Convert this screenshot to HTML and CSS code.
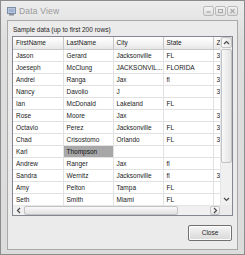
FILE: index.html
```html
<!DOCTYPE html>
<html>
<head>
<meta charset="utf-8">
<link rel="stylesheet" href="styles.css">
</head>
<body>
<div class="window">
  <div class="titlebar">
    <svg class="appicon" width="9" height="9" viewBox="0 0 9 9">
      <rect x="0.5" y="0.5" width="8" height="6" fill="#cfd8e6" stroke="#7d8ea8"/>
      <rect x="1.5" y="1.5" width="6" height="4" fill="#9fb3d1"/>
      <rect x="2" y="7" width="5" height="1.5" fill="#8a8f98"/>
    </svg>
    <span class="title">Data View</span>
    <div class="tbuttons">
      <span class="tbtn"><svg width="9" height="8" viewBox="0 0 9 8"><rect x="2.5" y="4.5" width="4" height="1" fill="#9a9a9a"/></svg></span>
      <span class="tbtn"><svg width="9" height="8" viewBox="0 0 9 8"><rect x="2.5" y="2.5" width="4" height="3" fill="none" stroke="#a8a8a8"/></svg></span>
      <span class="tbtn"><svg width="9" height="8" viewBox="0 0 9 8"><path d="M2.5 2 L6.5 6 M6.5 2 L2.5 6" stroke="#a8a8a8" stroke-width="1.1"/></svg></span>
    </div>
  </div>
  <div class="client">
    <div class="caption">Sample data (up to first 200 rows)</div>
    <div class="grid">
      <div class="viewport">
        <table>
          <colgroup><col class="c"><col class="c"><col class="c"><col class="c"><col class="c"></colgroup>
          <thead>
            <tr><th>FirstName</th><th>LastName</th><th>City</th><th>State</th><th>Zip</th></tr>
          </thead>
          <tbody>
            <tr><td>Jason</td><td>Gerard</td><td>Jacksonville</td><td>FL</td><td>32256</td></tr>
            <tr><td>Joeseph</td><td>McClung</td><td>JACKSONVIL...</td><td>FLORIDA</td><td>32258</td></tr>
            <tr><td>Andrei</td><td>Ranga</td><td>Jax</td><td>fl</td><td>32256</td></tr>
            <tr><td>Nancy</td><td>Davolio</td><td>J</td><td></td><td>32256</td></tr>
            <tr><td>Ian</td><td>McDonald</td><td>Lakeland</td><td>FL</td><td></td></tr>
            <tr><td>Rose</td><td>Moore</td><td>Jax</td><td></td><td>32256</td></tr>
            <tr><td>Octavio</td><td>Perez</td><td>Jacksonville</td><td>FL</td><td>32256</td></tr>
            <tr><td>Chad</td><td>Crisostomo</td><td>Orlando</td><td>FL</td><td>32801</td></tr>
            <tr><td>Karl</td><td class="sel">Thompson</td><td></td><td></td><td></td></tr>
            <tr><td>Andrew</td><td>Ranger</td><td>Jax</td><td>fl</td><td></td></tr>
            <tr><td>Sandra</td><td>Wernitz</td><td>Jacksonville</td><td>fl</td><td>32256</td></tr>
            <tr><td>Amy</td><td>Pelton</td><td>Tampa</td><td>FL</td><td></td></tr>
            <tr><td>Seth</td><td>Smith</td><td>Miami</td><td>FL</td><td></td></tr>
          </tbody>
        </table>
      </div>
      <div class="vscroll">
        <span class="sbtn"><svg width="7" height="5" viewBox="0 0 7 5"><path d="M1 4 L3.5 1.5 L6 4" fill="none" stroke="#4a4a4a" stroke-width="1.2"/></svg></span>
        <span class="vtrack"><span class="vthumb"></span></span>
        <span class="sbtn"><svg width="7" height="5" viewBox="0 0 7 5"><path d="M1 1 L3.5 3.5 L6 1" fill="none" stroke="#4a4a4a" stroke-width="1.2"/></svg></span>
      </div>
      <div class="hscroll">
        <span class="sbtn"><svg width="5" height="7" viewBox="0 0 5 7"><path d="M4 1 L1.5 3.5 L4 6" fill="none" stroke="#4a4a4a" stroke-width="1.2"/></svg></span>
        <span class="htrack"><span class="hthumb"></span></span>
        <span class="sbtn"><svg width="5" height="7" viewBox="0 0 5 7"><path d="M1 1 L3.5 3.5 L1 6" fill="none" stroke="#4a4a4a" stroke-width="1.2"/></svg></span>
      </div>
      <div class="corner"></div>
    </div>
    <div class="footer">
      <button class="close">Close</button>
    </div>
  </div>
</div>
</body>
</html>
```
FILE: styles.css
```css
html, body {
  margin: 0;
  padding: 0;
  width: 245px;
  height: 255px;
  overflow: hidden;
  background: #ffffff;
  font-family: "Liberation Sans", Arial, sans-serif;
  font-size: 6.5px;
  color: #222;
}
.window {
  box-sizing: border-box;
  width: 245px;
  height: 255px;
  border: 1px solid #8c8c8c;
  background: linear-gradient(#ececec, #dedede 40px, #dcdcdc);
  display: flex;
  flex-direction: column;
  padding: 0 6px 4px 6px;
}
.titlebar {
  height: 19px;
  display: flex;
  align-items: center;
  gap: 3px;
  padding-left: 0;
}
.appicon { display: block; margin-top: 1px; }
.title {
  font-family: "Liberation Sans", Arial, sans-serif;
  font-size: 8.5px;
  color: #9a9a9a;
  letter-spacing: 0.2px;
}
.tbuttons {
  margin-left: auto;
  display: flex;
  gap: 1px;
  margin-right: 0;
}
.tbtn {
  width: 9px;
  height: 8px;
  border: 1px solid #b9b9b9;
  border-radius: 2px;
  background: linear-gradient(#f4f4f4, #dcdcdc);
  display: flex;
}
.tbtn svg { display: block; }
.client {
  flex: 1;
  border: 1px solid #a9a9a9;
  background: #ebebeb;
  display: flex;
  flex-direction: column;
  padding: 3px 4px 0 4px;
}
.caption {
  height: 12px;
  line-height: 12px;
  color: #1e1e1e;
  padding-left: 1px;
}
.grid {
  margin-left: 0;
  height: 178px;
  border: 1px solid #828790;
  background: #ffffff;
  display: grid;
  grid-template-columns: 1fr 12px;
  grid-template-rows: 1fr 10px;
  overflow: hidden;
}
.viewport {
  overflow: hidden;
  position: relative;
}
table {
  border-collapse: collapse;
  table-layout: fixed;
  width: 250px;
}
col.c { width: 50px; }
th, td {
  height: 12px;
  padding: 0 0 0 3px;
  text-align: left;
  font-weight: normal;
  white-space: nowrap;
  overflow: hidden;
  box-sizing: border-box;
  line-height: 11px;
}
th {
  height: 12px;
  background: linear-gradient(#ffffff, #f2f2f2 60%, #e6e6e6);
  border-right: 1px solid #c6c6c6;
  border-bottom: 1px solid #c8c8c8;
  color: #222;
}
td {
  border-right: 1px solid #e2e2e2;
  border-bottom: 1px solid #e2e2e2;
  color: #1a1a1a;
}
td.sel {
  background: #a7a7a7;
  color: #111;
}
.vscroll {
  display: flex;
  flex-direction: column;
  background: #f0f0f0;
  border-left: 1px solid #e6e6e6;
}
.vscroll .sbtn { height: 11px; }
.sbtn {
  display: flex;
  align-items: center;
  justify-content: center;
  flex: none;
}
.vscroll .sbtn:first-child {
  border: 1px solid #c4c4c4;
  border-radius: 2px;
  background: linear-gradient(90deg, #fafafa, #e4e4e4);
  height: 9px;
}
.vtrack {
  flex: 1;
  display: flex;
  flex-direction: column;
  padding: 1px 0;
}
.vthumb {
  height: 114px;
  border: 1px solid #c3c3c3;
  border-radius: 2px;
  background: linear-gradient(90deg, #f9f9f9, #e2e2e2);
  box-sizing: border-box;
}
.hscroll {
  display: flex;
  background: #f0f0f0;
  border-top: 1px solid #e6e6e6;
}
.hscroll .sbtn { width: 10px; }
.htrack {
  flex: 1;
  display: flex;
  padding: 0 1px;
}
.hthumb {
  width: 154px;
  border: 1px solid #c3c3c3;
  border-radius: 2px;
  background: linear-gradient(#f9f9f9, #e2e2e2);
  box-sizing: border-box;
}
.hscroll .sbtn:last-child {
  border: 1px solid #c4c4c4;
  border-radius: 2px;
  background: linear-gradient(#fafafa, #e4e4e4);
  width: 8px;
}
.corner { background: #ebebeb; }
.footer {
  flex: 1;
  display: flex;
  justify-content: flex-end;
  align-items: center;
  padding-right: 1px;
}
.close {
  width: 44px;
  height: 16px;
  font-family: "Liberation Sans", Arial, sans-serif;
  font-size: 6.5px;
  color: #1e1e1e;
  border: 1px solid #707070;
  border-radius: 2px;
  background: linear-gradient(#f6f6f6, #e6e6e6 50%, #d8d8d8);
  box-shadow: inset 0 0 0 1px #fcfcfc;
  padding: 0;
}
```
